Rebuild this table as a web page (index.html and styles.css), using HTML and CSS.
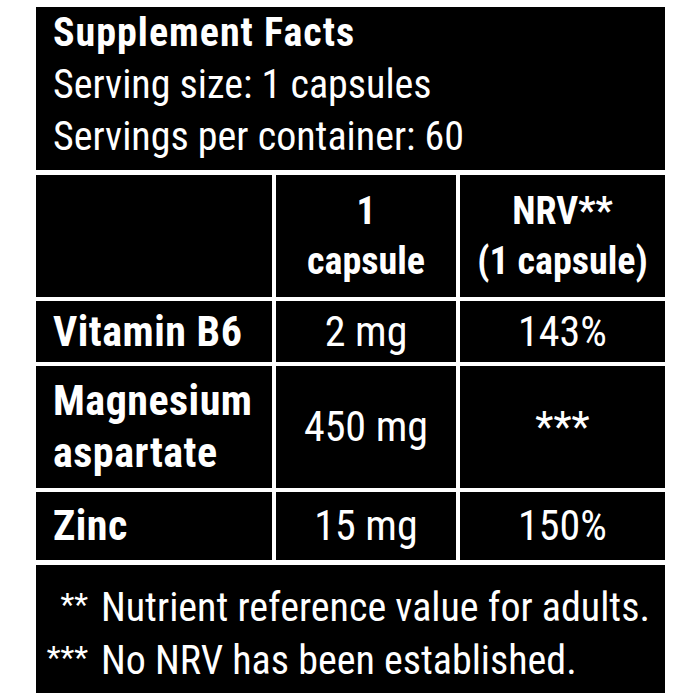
FILE: index.html
```html
<!DOCTYPE html>
<html lang="en">
<head>
<meta charset="utf-8">
<title>Supplement Facts</title>
<link rel="stylesheet" href="styles.css">
</head>
<body>
<div class="label">
  <div class="head">
    <div class="title">Supplement Facts</div>
    <div class="line">Serving size: 1 capsules</div>
    <div class="line">Servings per container: 60</div>
  </div>
  <div class="grid">
    <div class="cell hdr name"></div>
    <div class="cell hdr center bold">1<br>capsule</div>
    <div class="cell hdr center bold">NRV**<br>(1 capsule)</div>

    <div class="cell r1 name bold">Vitamin B6</div>
    <div class="cell r1 center">2 mg</div>
    <div class="cell r1 center">143%</div>

    <div class="cell r2 name bold">Magnesium<br>aspartate</div>
    <div class="cell r2 center">450 mg</div>
    <div class="cell r2 center">***</div>

    <div class="cell r3 name bold">Zinc</div>
    <div class="cell r3 center">15 mg</div>
    <div class="cell r3 center">150%</div>
  </div>
  <div class="foot">
    <span class="mark">**</span><span class="note">Nutrient reference value for adults.</span>
    <span class="mark">***</span><span class="note">No NRV has been established.</span>
  </div>
</div>
</body>
</html>
```
FILE: styles.css
```css
html, body {
  margin: 0;
  padding: 0;
  background: #ffffff;
}
body {
  font-family: "Roboto Condensed", "Liberation Sans", sans-serif;
  color: #ffffff;
}
.label {
  width: 629px;
  margin: 7px 0 0 36px;
  display: flex;
  flex-direction: column;
  gap: 5px;
}
.head {
  background: #000000;
  height: 163px;
  box-sizing: border-box;
  padding: 0 0 0 17px;
}
.title {
  font-weight: 700;
  font-size: 40px;
  line-height: 52px;
  letter-spacing: 1px;
}
.line {
  font-size: 40px;
  line-height: 52px;
}
.grid {
  display: grid;
  grid-template-columns: 236px 180px 205px;
  grid-template-rows: 122px 61px 122px 68px;
  gap: 4px;
}
.cell {
  background: #000000;
  display: flex;
  align-items: center;
  font-size: 42px;
  line-height: 52px;
}
.hdr {
  font-size: 38px;
  line-height: 50px;
}
.name {
  padding-left: 17px;
  letter-spacing: 0.5px;
}
.center {
  justify-content: center;
  text-align: center;
}
.bold {
  font-weight: 700;
}
.foot {
  background: #000000;
  height: 128px;
  box-sizing: border-box;
  padding: 16px 0 0 8px;
  display: grid;
  grid-template-columns: 44px auto;
  grid-auto-rows: 53px;
  column-gap: 13px;
  font-size: 40px;
  line-height: 53px;
  white-space: nowrap;
}
.mark {
  text-align: right;
  font-size: 32px;
  line-height: 46px;
}
```
